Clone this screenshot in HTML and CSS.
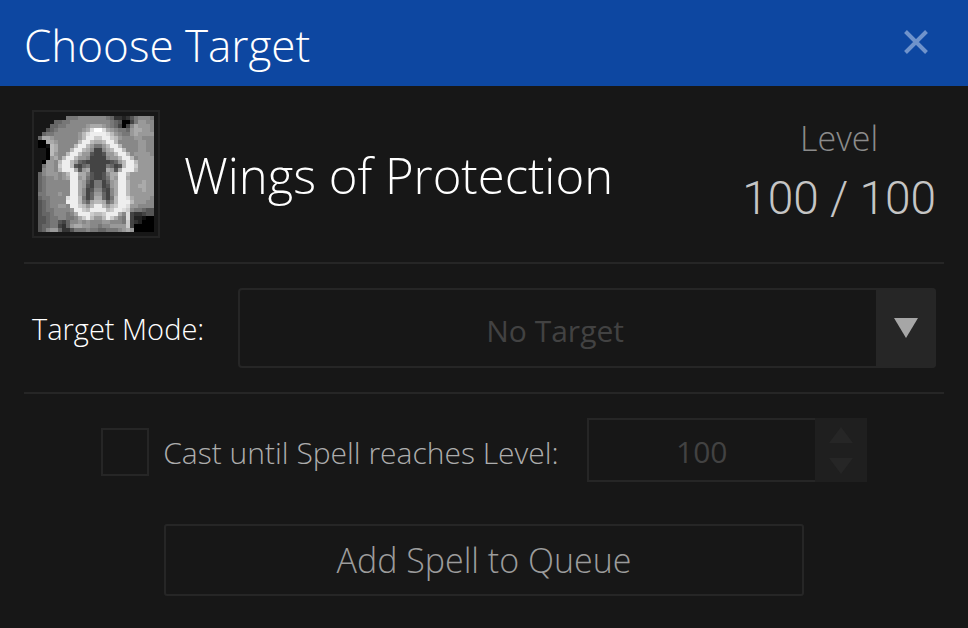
FILE: index.html
```html
<!DOCTYPE html>
<html lang="en">
<head>
<meta charset="utf-8">
<title>Choose Target</title>
<link rel="stylesheet" href="styles.css">
</head>
<body>
<form class="dialog">
  <header class="titlebar">
    <h1 class="title">Choose Target</h1>
    <button class="close" type="button" aria-label="Close">
      <svg viewBox="0 0 24 24" width="24" height="24"><path d="M1.5 1.5L22.5 22.5M22.5 1.5L1.5 22.5"/></svg>
    </button>
  </header>
  <main class="content">
    <section class="spell">
      <div class="spell-icon"><svg id="spell-art" viewBox="0 0 29 29" shape-rendering="crispEdges"></svg></div>
      <h2 class="spell-name">Wings of Protection</h2>
      <div class="level">
        <span class="level-caption">Level</span>
        <span class="level-value">100 / 100</span>
      </div>
    </section>
    <section class="mode">
      <label class="mode-label" for="mode">Target Mode:</label>
      <div class="select-box">
        <select id="mode"><option>No Target</option></select>
        <span class="select-arrow"><svg viewBox="0 0 24 20" width="24" height="20"><path d="M0 0H24L12 20Z"/></svg></span>
      </div>
    </section>
    <section class="until">
      <div class="until-choice">
        <input class="check" type="checkbox" id="until">
        <label for="until">Cast until Spell reaches Level:</label>
      </div>
      <div class="number-box">
        <input type="number" aria-label="Level" value="100" disabled>
        <div class="spinner">
          <svg viewBox="0 0 24 16" width="24" height="16"><path d="M12 0L24 16H0Z"/></svg>
          <svg viewBox="0 0 24 16" width="24" height="16"><path d="M0 0H24L12 16Z"/></svg>
        </div>
      </div>
    </section>
    <button class="submit" type="button">Add Spell to Queue</button>
  </main>
</form>
<script src="icon.js"></script>
</body>
</html>
```
FILE: icon.js
```js
// Spell icon: one hex digit per pixel (grey level), "." is transparent.
const rows = [
  ".......77788888" + "88763323578887",
  "....66778888888" + "88876500479988",
  "...6677888889aa" + "a98764048a9998",
  "..5678888889adf" + "fda987769aa998",
  ".6778888889bdee" + "eedb98779a9999",
  "6aa98888889beec" + "ceecb988899888",
  "00aa988888beeba" + "abeeb888889988",
  "001ba8888beeb97" + "79beeb88889988",
  "..0ba888beeba84" + "48abeeb8889988",
  "..0b988beeb9954" + "4599beeb899998",
  "..09a8beeb99844" + "44899beeb89999",
  ".0998beeb965444" + "444569beeb9999",
  ".7998ceeb546744" + "447645beec9999",
  ".8998beeea59a44" + "44a95aeeeb9999",
  "6899989beeaa854" + "458aaeeb999999",
  "6788989aee9a754" + "457a9eea999999",
  "67888888eea9647" + "7469aeeb999a99",
  "67888888eea9547" + "7459aeeb99aa99",
  "67888888eea8458" + "8548aeeb999a99",
  "77888988eea8469" + "9648aeeb999999",
  "6778888deeb746a" + "a647beeda99998",
  "5678888eeeb86ab" + "ba68beeeb99988",
  "56788998eecb9be" + "eb9bceed998888",
  "567788889eecbee" + "eebceedc877655",
  "566788878aeeecb" + "bceeea8d433455",
  "5567788778aceb9" + "9beca87d422100",
  "556775468898988" + "8998887c432000",
  "566774369aa9988" + "7889999c400000",
  "568996335777877" + "6677789a900000"
];
const art = document.getElementById("spell-art");
rows.forEach((row, y) => {
  [...row].forEach((shade, x) => {
    if (shade === ".") return;
    const r = document.createElementNS("http://www.w3.org/2000/svg", "rect");
    r.setAttribute("x", x);
    r.setAttribute("y", y);
    r.setAttribute("width", 1);
    r.setAttribute("height", 1);
    r.setAttribute("fill", "#" + shade.repeat(3));
    art.append(r);
  });
});
```
FILE: styles.css
```css
* { box-sizing: border-box; }

body {
  margin: 0;
  background: #171717;
  color: #fff;
  font-family: "Open Sans", "Noto Sans", sans-serif;
  font-weight: 300;
  font-size: 30px;
}

button, input, select { font: inherit; color: inherit; margin: 0; }
h1, h2 { margin: 0; font-weight: 300; }

.titlebar {
  display: flex;
  align-items: center;
  justify-content: space-between;
  padding: 8px 40px 8px 24px;
  background: #0d47a1;
}
.title { padding-top: 4px; font-size: 44px; line-height: 66px; }
.close {
  display: flex;
  padding: 0 0 2px;
  border: 0;
  background: none;
}
.close svg { fill: none; stroke: #6f93cb; stroke-width: 4; }

.content { display: flex; flex-direction: column; padding: 24px; }

.spell {
  display: flex;
  align-items: center;
  gap: 24px;
  padding: 0 8px 24px;
  border-bottom: 2px solid #262626;
}
.spell-icon {
  flex: none;
  padding: 4px;
  border: 2px solid #242424;
}
.spell-icon svg { display: block; width: 116px; height: 116px; }
.spell-name { flex: 1; padding-top: 2px; font-size: 49px; line-height: 64px; white-space: nowrap; }
.level {
  display: flex;
  flex-direction: column;
  align-items: center;
  white-space: nowrap;
}
.level-caption { font-size: 34px; line-height: 56px; color: #8b8b8b; }
.level-value {
  padding-bottom: 8px;
  font-family: Roboto, "Open Sans", sans-serif;
  font-size: 46px;
  line-height: 64px;
  color: #c5c5c5;
}

.mode {
  display: flex;
  align-items: center;
  gap: 34px;
  padding: 24px 8px;
  border-bottom: 2px solid #262626;
}
.mode-label { font-size: 29px; }
.select-box { position: relative; flex: 1; }
.select-box select {
  display: block;
  width: 100%;
  height: 80px;
  padding: 4px 64px 0 0;
  border: 2px solid #262626;
  border-radius: 4px;
  background: none;
  appearance: none;
  color: #424242;
  font-weight: 400;
  text-align: center;
  text-align-last: center;
}
.select-arrow {
  position: absolute;
  inset: 0 0 0 auto;
  display: flex;
  align-items: center;
  justify-content: center;
  width: 60px;
  border-radius: 0 4px 4px 0;
  background: #262626;
  fill: #a6a6a6;
  pointer-events: none;
}

.until {
  display: flex;
  align-items: center;
  justify-content: center;
  gap: 28px;
  padding: 24px 0 42px;
}
.until-choice {
  display: flex;
  align-items: center;
  gap: 14px;
  padding-top: 4px;
  color: #adadad;
  white-space: nowrap;
}
.check {
  width: 48px;
  height: 48px;
  border: 2px solid #262626;
  appearance: none;
}
.number-box { display: flex; width: 280px; height: 64px; }
.number-box input {
  flex: 1;
  min-width: 0;
  padding: 2px 0 0;
  border: 2px solid #262626;
  border-right: 0;
  border-radius: 0;
  background: none;
  color: #424242;
  font-weight: 400;
  text-align: center;
  appearance: textfield;
}
.number-box input::-webkit-inner-spin-button { display: none; }
.spinner {
  display: flex;
  flex-direction: column;
  align-items: center;
  justify-content: center;
  gap: 15px;
  width: 52px;
  background: #1f1f1f;
  fill: #262626;
}

.submit {
  align-self: center;
  width: min(100%, 640px);
  height: 72px;
  border: 2px solid #262626;
  border-radius: 3px;
  background: none;
  color: #9c9c9c;
  font-size: 34px;
}
```
